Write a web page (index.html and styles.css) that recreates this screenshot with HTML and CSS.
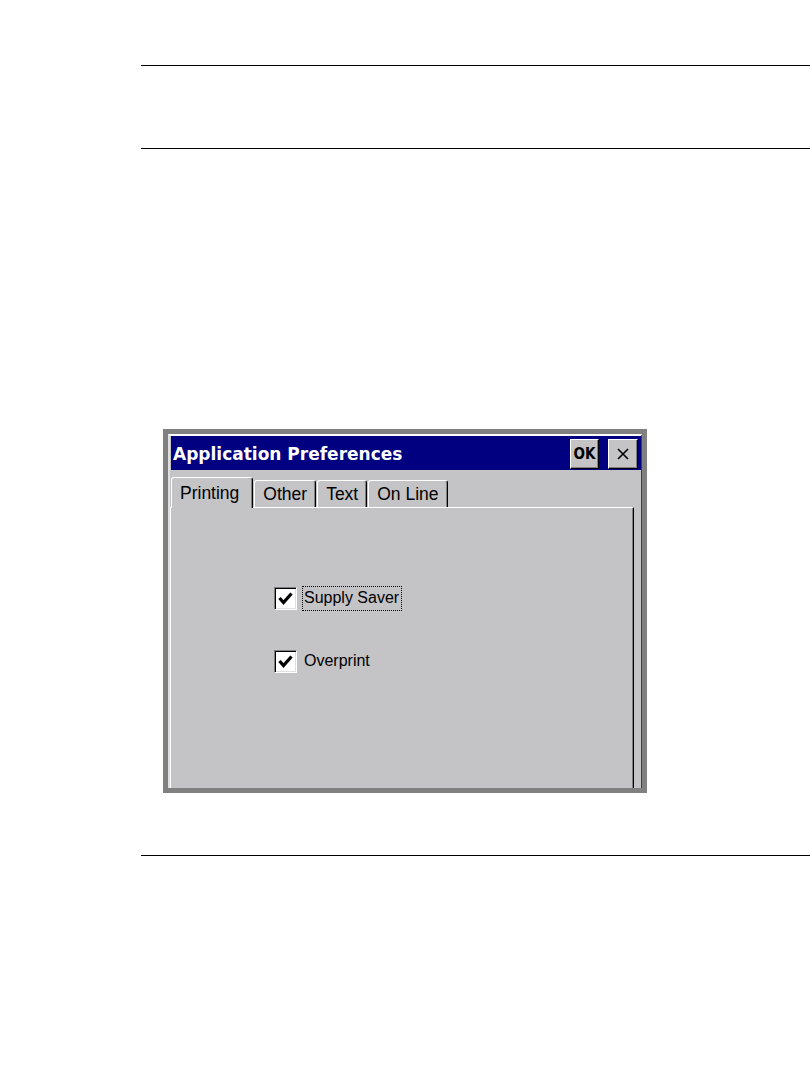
FILE: index.html
```html
<!DOCTYPE html>
<html lang="en">
<head>
  <meta charset="UTF-8" />
  <title>Application Preferences</title>
  <link rel="stylesheet" href="styles.css">
</head>
<body>
  <div class="page">
    <div class="rule-band"></div>

    <div class="shot">
      <div class="window">
        <div class="titlebar">
          <span class="title">Application Preferences</span>
          <div class="title-buttons">
            <button class="tb-btn ok">OK</button>
            <button class="tb-btn close">
              <svg width="14" height="14" viewBox="0 0 14 14">
                <path d="M2 2 L12 12 M12 2 L2 12" stroke="#000" stroke-width="1.6" fill="none" />
              </svg>
            </button>
          </div>
        </div>

        <div class="tabs">
          <div class="tab active">Printing</div>
          <div class="tab">Other</div>
          <div class="tab">Text</div>
          <div class="tab">On Line</div>
        </div>

        <div class="panel">
          <div class="option">
            <span class="check">
              <svg width="17" height="17" viewBox="0 0 17 17">
                <path d="M2.5 8 L6.5 12.5 L14.5 3.5" stroke="#000" stroke-width="3.2" fill="none" />
              </svg>
            </span>
            <span class="label focus">Supply Saver</span>
          </div>
          <div class="option">
            <span class="check">
              <svg width="17" height="17" viewBox="0 0 17 17">
                <path d="M2.5 8 L6.5 12.5 L14.5 3.5" stroke="#000" stroke-width="3.2" fill="none" />
              </svg>
            </span>
            <span class="label">Overprint</span>
          </div>
        </div>
      </div>
    </div>

    <div class="rule"></div>
  </div>
</body>
</html>
```

FILE: styles.css
```css
* {
  box-sizing: border-box;
  margin: 0;
  padding: 0;
}

body {
  background: #fff;
  font-family: 'Liberation Sans', Arial, sans-serif;
  color: #000;
}

.page {
  padding-left: 141px;
}

.rule-band {
  margin-top: 65px;
  height: 84px;
  border-top: 1px solid #000;
  border-bottom: 1px solid #000;
}

.rule {
  margin-top: 62px;
  border-top: 1px solid #000;
}

/* screenshot frame */
.shot {
  margin: 280px 0 0 22px;
  width: 484px;
  height: 364px;
  border: 5px solid #808080;
}

.window {
  height: 100%;
  display: flex;
  flex-direction: column;
  background: #c4c3c6;
  border-top: 2px solid #fff;
  border-left: 2px solid #dfdfdf;
  border-right: 1px solid #404040;
}

.titlebar {
  height: 34px;
  margin-left: 1px;
  background: #000080;
  display: flex;
  align-items: center;
  justify-content: space-between;
  padding: 0 3px 0 2px;
}

.title {
  font-family: 'DejaVu Sans', sans-serif;
  font-weight: bold;
  font-size: 17px;
  color: #fff;
  padding-top: 2px;
}

.title-buttons {
  display: flex;
  gap: 9px;
  padding-top: 2px;
}

.tb-btn {
  height: 30px;
  background: #c4c3c6;
  border: 1px solid;
  border-color: #fff #000 #000 #fff;
  box-shadow: inset -1px -1px #808080;
  display: flex;
  align-items: center;
  justify-content: center;
  font-family: 'DejaVu Sans Condensed', 'DejaVu Sans', sans-serif;
  font-weight: bold;
  font-size: 15px;
  color: #000;
}

.tb-btn.ok {
  width: 29px;
}

.tb-btn.close {
  width: 30px;
}

/* tabs */
.tabs {
  height: 38px;
  display: flex;
  align-items: flex-end;
  gap: 1px;
  padding-left: 1px;
  margin-bottom: -1px;
}

.tab {
  height: 28px;
  padding: 0 8px;
  font-size: 17.5px;
  line-height: 26px;
  border-top: 1px solid #fff;
  border-left: 1px solid #fff;
  border-right: 1px solid #000;
  border-radius: 3px 3px 0 0;
  box-shadow: inset -1px 0 #808080;
}

.tab.active {
  position: relative;
  z-index: 1;
  height: 31px;
  padding: 0 13px 0 8px;
  line-height: 30px;
  background: #c4c3c6;
}

.panel {
  flex: 1;
  margin-right: 7px;
  border-top: 1px solid #fff;
  border-left: 1px solid #fff;
  border-right: 1px solid #000;
  box-shadow: inset -1px 0 #808080;
  padding: 78px 0 0 103px;
  display: flex;
  flex-direction: column;
  gap: 38px;
}

.option {
  display: flex;
  align-items: center;
  gap: 5px;
}

.check {
  width: 23px;
  height: 23px;
  background: #fff;
  border: 1px solid;
  border-color: #808080 #fff #fff #808080;
  box-shadow: inset 1px 1px #000, inset -1px -1px #dfdfdf;
  display: flex;
  align-items: center;
  justify-content: center;
}

.label {
  font-size: 16px;
  padding: 2px 2px 3px 1px;
  border: 1px solid transparent;
}

.label.focus {
  border: 1px dotted #000;
}
```
